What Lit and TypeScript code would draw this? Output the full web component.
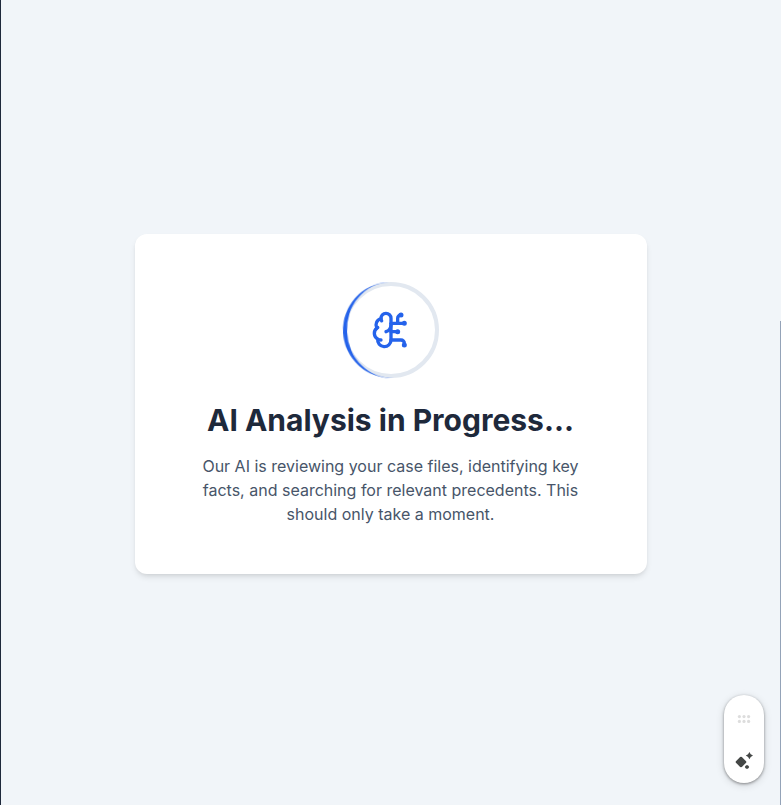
import { LitElement, html, css, svg } from "lit";
import { customElement } from "lit/decorators.js";

@customElement("analysis-card")
class AnalysisCard extends LitElement {
  static styles = css`
    :host { display: block; }
    .card {
      box-sizing: border-box;
      width: 512px;
      height: 340px;
      padding: 48px;
      display: flex;
      flex-direction: column;
      align-items: center;
      background: #fff;
      border-radius: 12px;
      box-shadow: 0 4px 6px -1px rgba(0, 0, 0, 0.1), 0 2px 4px -2px rgba(0, 0, 0, 0.1);
      text-align: center;
    }
    .loader {
      position: relative;
      box-sizing: border-box;
      width: 96px;
      height: 96px;
      border: 4px solid #e2e8f0;
      border-radius: 50%;
      display: flex;
      align-items: center;
      justify-content: center;
      color: #2563eb;
    }
    .arc {
      position: absolute;
      inset: -4px;
      box-sizing: border-box;
      border: 0 solid #2563eb;
      border-top-width: 4px;
      border-radius: 50%;
      transform: rotate(-93deg);
      will-change: transform;
    }
    .icon { width: 40px; height: 40px; display: block; }
    h2 {
      margin: 24px 0 0;
      font-size: 30px;
      line-height: 36px;
      font-weight: 700;
      color: #1e293b;
      white-space: nowrap;
      padding-right: 1px;
    }
    p {
      margin: 16px 0 0;
      box-sizing: border-box;
      width: 416px;
      padding-right: 1px;
      font-size: 16px;
      line-height: 24px;
      color: #475569;
    }
  `;

  render() {
    return html`
      <section class="card">
        <div class="loader">
          <div class="arc"></div>
          <svg class="icon" viewBox="0 0 24 24" fill="none" stroke="currentColor"
            stroke-width="2" stroke-linecap="round" stroke-linejoin="round">
            <path d="M12 5a3 3 0 1 0-5.997.125 4 4 0 0 0-2.526 5.77 4 4 0 0 0 .556 6.588A4 4 0 1 0 12 18Z" />
            <path d="M9 13a4.5 4.5 0 0 0 3-4" />
            <path d="M6.003 5.125A3 3 0 0 0 6.401 6.5" />
            <path d="M3.477 10.896a4 4 0 0 1 .585-.396" />
            <path d="M6 18a4 4 0 0 1-1.967-.516" />
            <path d="M12 13h4" />
            <path d="M12 18h6a2 2 0 0 1 2 2v1" />
            <path d="M12 8h8" />
            <path d="M16 8V5a2 2 0 0 1 2-2" />
            <circle cx="16" cy="13" r=".5" />
            <circle cx="18" cy="3" r=".5" />
            <circle cx="20" cy="21" r=".5" />
            <circle cx="20" cy="8" r=".5" />
          </svg>
        </div>
        <h2>AI Analysis in Progress...</h2>
        <p>Our AI is reviewing your case files, identifying key facts, and searching for relevant precedents. This should only take a moment.</p>
      </section>
    `;
  }
}

@customElement("assist-pill")
class AssistPill extends LitElement {
  static styles = css`
    :host { display: block; }
    .pill {
      box-sizing: border-box;
      width: 40px;
      height: 88px;
      border-radius: 20px;
      background: #fff;
      box-shadow: 0 1px 3px rgba(0, 0, 0, 0.4), 0 2px 8px rgba(0, 0, 0, 0.14);
      display: flex;
      flex-direction: column;
      align-items: center;
      padding-top: 14px;
      gap: 20px;
    }
    svg { display: block; width: 20px; height: 20px; }
    .grip { fill: #dddddd; }
    .sparkle { width: 22px; height: 22px; fill: #444746; }
  `;

  render() {
    const dots = [5.4, 10, 14.6].flatMap((x) => [7.6, 12.4].map((y) => [x, y]));
    return html`
      <div class="pill">
        <svg class="grip" viewBox="0 0 20 20">
          ${dots.map(([x, y]) => svg`<circle cx=${x} cy=${y} r="1.6" />`)}
        </svg>
        <svg class="sparkle" viewBox="0 0 22 22">
          <path d="M8 7.7Q9 7.7 9.6 8.8L12.3 11.5Q13.4 12.1 13.4 13Q13.4 13.9 12.3 14.5L9.6 17.2Q9 18.3 8 18.3Q7 18.3 6.4 17.2L3.7 14.5Q2.6 13.9 2.6 13Q2.6 12.1 3.7 11.5L6.4 8.8Q7 7.7 8 7.7Z" />
          <path d="M16.4 3L17.7 5.3L20 6.6L17.7 7.9L16.4 10.2L15.1 7.9L12.8 6.6L15.1 5.3Z" />
          <path d="M14 15.9L15.4 16.8L16.2 18L15.4 19.2L14 20.1L12.6 19.2L11.8 18L12.6 16.8Z" />
        </svg>
      </div>
    `;
  }
}

@customElement("app-root")
class AppRoot extends LitElement {
  static styles = css`
    :host {
      display: block;
      font-family: Inter, "Liberation Sans", sans-serif;
    }
    .shell {
      position: relative;
      box-sizing: border-box;
      height: 805px;
      padding-top: 3px;
      border-left: 1px solid #1e293b;
      background: #f1f5f9;
      overflow: hidden;
      display: flex;
      align-items: center;
      justify-content: center;
    }
    .assist { position: absolute; right: 17px; bottom: 22px; }
    .scroll { position: absolute; right: 0; top: 321px; bottom: 0; width: 1px; background: #94a3b8; }
  `;

  render() {
    return html`
      <main class="shell">
        <analysis-card></analysis-card>
        <assist-pill class="assist"></assist-pill>
        <div class="scroll"></div>
      </main>
    `;
  }
}
